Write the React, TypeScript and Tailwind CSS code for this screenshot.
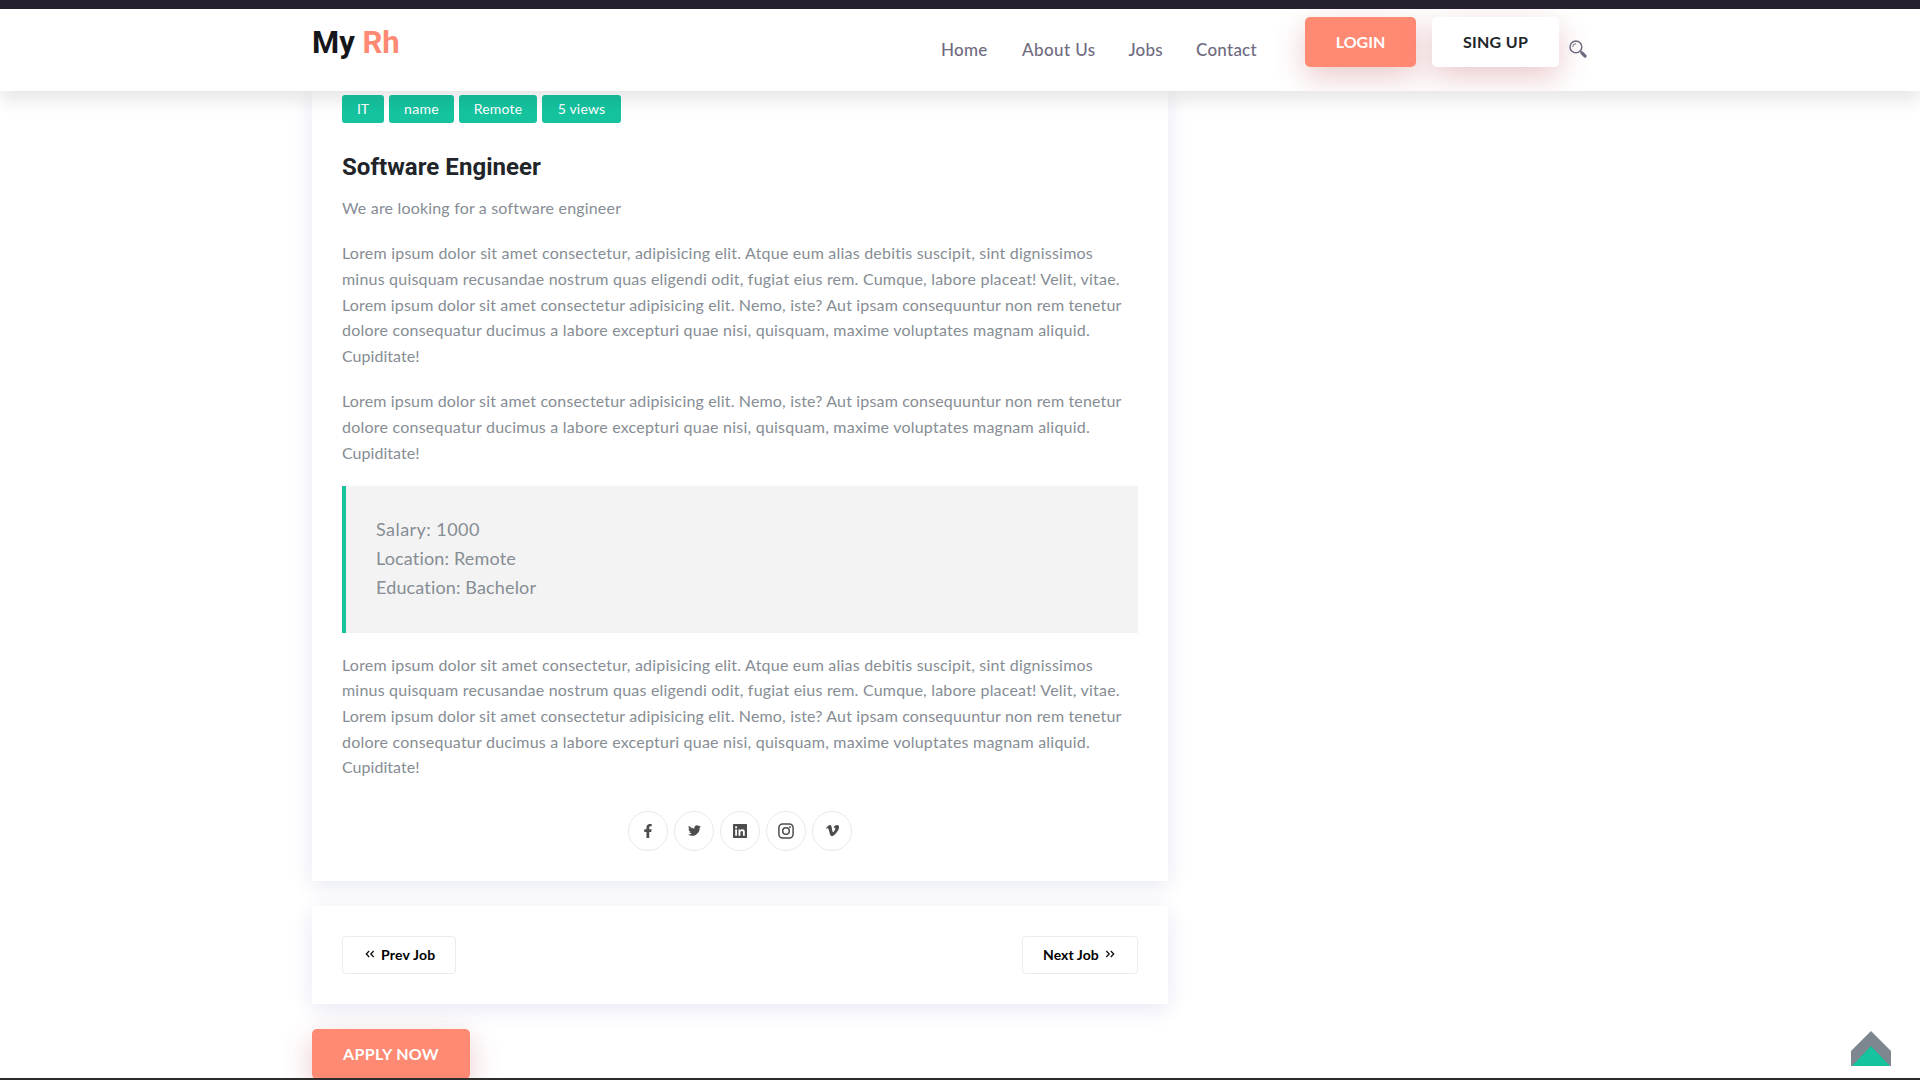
import { FaFacebookF, FaTwitter, FaVimeoV } from "react-icons/fa";

const P1: [string, string][] = [
  ["Lorem ipsum dolor sit amet consectetur, adipisicing elit. Atque eum alias debitis suscipit, sint dignissimos", "tracking-[0.214px]"],
  ["minus quisquam recusandae nostrum quas eligendi odit, fugiat eius rem. Cumque, labore placeat! Velit, vitae.", "tracking-[0.205px]"],
  ["Lorem ipsum dolor sit amet consectetur adipisicing elit. Nemo, iste? Aut ipsam consequuntur non rem tenetur", "tracking-[0.157px]"],
  ["dolore consequatur ducimus a labore excepturi quae nisi, quisquam, maxime voluptates magnam aliquid.", "tracking-[0.225px]"],
  ["Cupiditate!", "tracking-[0.04px]"],
];

const NAV: [string, string][] = [
  ["Home", "w-[46px] mr-[35px] tracking-[0.25px]"],
  ["About Us", "w-[73px] mr-[33.5px] tracking-[0.4px]"],
  ["Jobs", "w-[34px] mr-[33.5px] tracking-[0.2px]"],
  ["Contact", "w-[60px] mr-[49px] tracking-[0.25px]"],
];

const BADGES: [string, string][] = [
  ["IT", "w-[42px]"],
  ["name", "w-[65px] tracking-[0.3px]"],
  ["Remote", "w-[78px] tracking-[0.2px]"],
  ["5 views", "w-[79px] tracking-[0.2px]"],
];

function Paragraph({ lines }: { lines: [string, string][] }) {
  return (
    <p className="mb-5 text-[16px] leading-[25.6px] text-[#868d94]">
      {lines.map(([text, tracking]) => (
        <span key={text} className={`block whitespace-nowrap ${tracking}`}>
          {text}
        </span>
      ))}
    </p>
  );
}

function SearchIcon() {
  return (
    <svg className="mt-[31px] ml-[9.5px] h-[18px] w-[18px]" viewBox="0 0 18 18" fill="none" stroke="#6f6b80">
      <circle cx="6.9" cy="6.9" r="5.9" strokeWidth="1.5" />
      <path d="M3.7 6.9A3.2 3.2 0 0 1 6.9 3.7" strokeWidth="1" />
      <path d="M11.2 11.2l1.6 1.6" strokeWidth="1.4" />
      <path d="M13 13l3.1 3.1" strokeWidth="3.2" strokeLinecap="round" />
    </svg>
  );
}

function LinkedinIcon() {
  return (
    <svg width="14" height="14" viewBox="0 0 14 14">
      <rect width="14" height="14" rx="0.5" fill="#4d4d4d" />
      <rect x="2.2" y="5.4" width="1.8" height="6.3" fill="#fff" />
      <circle cx="3.1" cy="3.3" r="1.1" fill="#fff" />
      <path d="M5.5 5.4h1.9v.9c.3-.6 1-1.1 2-1.1 2 0 2.4 1.3 2.4 3v3.5H10V8.600c0-.8 0-1.700-1.100-1.700-1.200 0-1.500.8-1.500 1.600v3.200H5.500z" fill="#fff" />
    </svg>
  );
}

function InstagramIcon() {
  return (
    <svg width="16" height="16" viewBox="0 0 16 16" fill="none" stroke="#4d4d4d" strokeWidth="1.5">
      <rect x="0.9" y="0.9" width="14.2" height="14.2" rx="3.8" />
      <circle cx="8" cy="8" r="3.3" />
      <circle cx="12" cy="4" r="0.9" fill="#4d4d4d" stroke="none" />
    </svg>
  );
}

function Chevrons({ flip }: { flip?: boolean }) {
  return (
    <svg
      className={flip ? "-mt-px h-[8px] w-[10px] -scale-x-100" : "-mt-px h-[8px] w-[10px]"}
      viewBox="0 0 10 8"
      fill="none"
      stroke="#111"
      strokeWidth="1.3"
    >
      <path d="M4.2 1L1.3 4l2.9 3M8.7 1L5.8 4l2.9 3" />
    </svg>
  );
}

const SOCIAL = [
  <FaFacebookF key="f" size={14} />,
  <FaTwitter key="t" size={13} />,
  <LinkedinIcon key="l" />,
  <InstagramIcon key="i" />,
  <FaVimeoV key="v" size={15} />,
];

export default function App() {
  return (
    <div className="relative flex h-[1080px] w-[1920px] flex-col overflow-hidden bg-white font-['Lato',sans-serif]">
      <div className="relative z-20 h-[9px] shrink-0 bg-[#24212d]" />
      <header className="relative z-10 flex h-[82px] shrink-0 bg-white pl-[312px] shadow-[0_10px_15px_rgba(25,25,25,0.1)]">
        <div className="flex h-[82px] w-full overflow-hidden">
          <div className="w-[629px] pt-[15px] font-['Roboto',sans-serif] text-[31px] leading-[38px] font-bold text-[#16161a]">
            My <span className="text-[#ff8a73]">Rh</span>
          </div>
          <nav className="flex pt-[28px] text-[17px] leading-[25px] font-medium text-[#6f6b80]">
            {NAV.map(([label, cls]) => (
              <a key={label} className={`block whitespace-nowrap ${cls}`}>
                {label}
              </a>
            ))}
          </nav>
          <a className="mt-[8px] flex h-[50px] w-[111px] items-center justify-center rounded-[5px] bg-[#ff8a73] pb-px text-[16px] font-bold text-white shadow-[0_10px_30px_rgba(180,60,70,0.28)]">
            LOGIN
          </a>
          <a className="mt-[8px] ml-4 flex h-[50px] w-[127px] items-center justify-center rounded-[5px] bg-white pb-px text-[16px] font-bold tracking-[0.3px] text-[#212529] shadow-[0_10px_30px_rgba(180,60,70,0.28)]">
            SING UP
          </a>
          <SearchIcon />
        </div>
      </header>

      <main className="ml-[312px] w-[856px]">
        <article className="h-[790px] bg-white px-[30px] pt-[4px] shadow-[0_5px_20px_rgba(60,60,170,0.12)]">
          <div className="flex gap-[5px]">
            {BADGES.map(([label, cls]) => (
              <span
                key={label}
                className={`flex h-[28px] items-center justify-center rounded-[3px] bg-[#15c39f] pb-[2px] text-[14px] text-white ${cls}`}
              >
                {label}
              </span>
            ))}
          </div>
          <h2 className="mt-[30px] font-['Roboto',sans-serif] text-[24px] leading-[29px] font-bold tracking-[0.04px] text-[#212529]">
            Software Engineer
          </h2>
          <div className="pt-[12.9px]">
            <Paragraph lines={[["We are looking for a software engineer", "tracking-[0.18px]"]]} />
            <Paragraph lines={P1} />
            <Paragraph lines={P1.slice(2)} />
          </div>
          <blockquote className="mt-[20.5px] mb-[19px] h-[147px] border-l-4 border-[#15c39f] bg-[#f3f3f3] py-[29.6px] pl-[30px] text-[18px] leading-[28.8px] text-[#868d94]">
            <div className="tracking-[0.45px]">Salary: 1000</div>
            <div className="tracking-[0.16px]">Location: Remote</div>
            <div className="tracking-[0.15px]">Education: Bachelor</div>
          </blockquote>
          <Paragraph lines={P1} />
          <div className="mt-[31px] flex justify-center gap-[6px] text-[#4d4d4d]">
            {SOCIAL.map((icon, i) => (
              <a key={i} className="flex h-10 w-10 items-center justify-center rounded-full border border-[#e9e9ec]">
                {icon}
              </a>
            ))}
          </div>
        </article>

        <div className="mt-[25px] flex h-[98px] items-center justify-between bg-white px-[30px] shadow-[0_5px_20px_rgba(60,60,170,0.12)]">
          <a className="flex h-[38px] w-[114px] items-center rounded-[4px] border border-[#e9ebee] pb-[2px] pl-[22px] text-[14px] font-bold tracking-[0.2px] text-black">
            <Chevrons />
            <span className="ml-[6px] whitespace-nowrap">Prev Job</span>
          </a>
          <a className="flex h-[38px] w-[116px] items-center rounded-[4px] border border-[#e9ebee] pb-[2px] pl-5 text-[14px] font-bold tracking-[0.08px] text-black">
            <span className="mr-[6px] whitespace-nowrap">Next Job</span>
            <Chevrons flip />
          </a>
        </div>

        <a className="mt-[25px] flex h-[50px] w-[158px] items-center justify-center rounded-[5px] bg-[#ff8a73] pb-px text-[16px] font-bold tracking-[0.3px] text-white shadow-[0_10px_30px_rgba(180,60,70,0.28)]">
          APPLY NOW
        </a>
      </main>

      <svg className="absolute top-[1031px] left-[1851px]" width="40" height="35" viewBox="0 0 40 35">
        <path d="M0 20L20 0l20 20v15H0z" fill="#7e8790" />
        <path d="M1 35L20 15l19 20z" fill="#15c39f" />
      </svg>
      <div className="absolute inset-x-0 bottom-0 h-[2px] bg-[#2c2c2c]" />
    </div>
  );
}
